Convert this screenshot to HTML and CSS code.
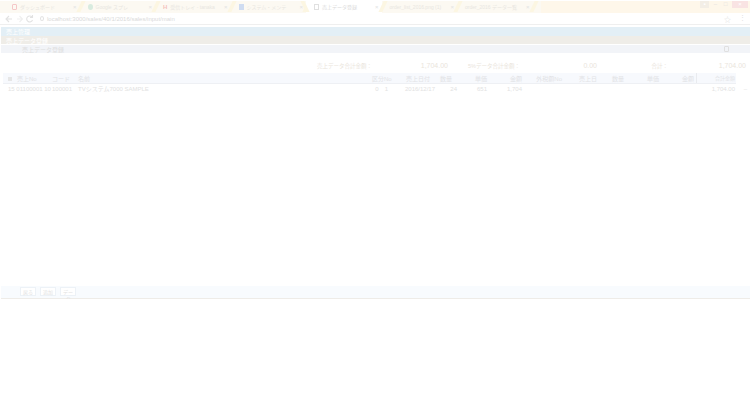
FILE: index.html
```html
<!DOCTYPE html>
<html lang="ja">
<head>
    <meta charset="UTF-8">
    <title>売上データ登録</title>
    <link rel="stylesheet" href="styles.css">
</head>
<body>
    <div class="tabs">
        <div class="tab"><span class="fav fav-red"></span><span class="tab-title">ダッシュボード</span><span class="tab-x">×</span></div>
        <div class="tab"><span class="fav fav-green"></span><span class="tab-title">Google スプレ</span><span class="tab-x">×</span></div>
        <div class="tab"><span class="fav-h">H</span><span class="tab-title">受信トレイ - tanaka</span><span class="tab-x">×</span></div>
        <div class="tab"><span class="fav fav-blue"></span><span class="tab-title">システム・メンテ</span><span class="tab-x">×</span></div>
        <div class="tab tab-active"><span class="fav fav-page"></span><span class="tab-title">売上データ登録</span><span class="tab-x">×</span></div>
        <div class="tab"><span class="tab-title">order_list_2016.png (1)</span><span class="tab-x">×</span></div>
        <div class="tab"><span class="tab-title">order_2016 データ一覧</span><span class="tab-x">×</span></div>
        <div class="win-btns">
            <span class="win-btn win-user">▪</span>
            <span class="win-btn">–</span>
            <span class="win-btn">□</span>
            <span class="win-btn win-close">×</span>
        </div>
    </div>

    <div class="addr">
        <svg class="nav" width="30" height="10" viewBox="0 0 30 10" fill="none" stroke="#e2e2e2" stroke-width="1.1">
            <path d="M7 5H1M4 2 1 5l3 3"/>
            <path d="M12 5h5.500M14.500 2l3 3-3 3" stroke="#efefef"/>
            <path d="M27 3a3 3 0 1 0 .5 3M27.500 1v2.500H25"/>
        </svg>
        <span class="addr-info"></span>
        <span class="addr-url">localhost:3000/sales/40/1/2016/sales/input/main</span>
        <span class="addr-icons"><span>☆</span><span>⋮</span></span>
    </div>

    <div class="bar bar-blue">売上管理</div>
    <div class="bar bar-beige">売上データ登録</div>
    <div class="bar bar-grey">
        <span>売上データ登録</span>
        <span class="bar-icon"></span>
    </div>

    <div class="totals">
        <span>売上データ合計金額：</span>
        <span class="t-num">1,704.00</span>
        <span>5%データ合計金額：</span>
        <span class="t-num">0.00</span>
        <span>合計：</span>
        <span class="t-num">1,704.00</span>
    </div>

    <div class="grid">
        <div class="row row-head">
            <span class="c-id"><i class="sort"></i>売上No</span>
            <span>コード</span>
            <span>名前</span>
            <span class="c-num">区分No</span>
            <span class="c-num c-pad5">売上日付</span>
            <span class="c-num c-pad5">数量</span>
            <span class="c-num">単価</span>
            <span class="c-num">金額</span>
            <span class="c-num">外税額No</span>
            <span class="c-num">売上日</span>
            <span class="c-num">数量</span>
            <span class="c-num">単価</span>
            <span class="c-num c-pad2">金額</span>
            <span class="c-num c-total">合計金額</span>
        </div>
        <div class="row row-body">
            <span class="c-id">15 01100001 10</span>
            <span>100001</span>
            <span>TVシステム7000 SAMPLE</span>
            <span class="c-num">0　1</span>
            <span class="c-num">2016/12/17</span>
            <span class="c-num">24</span>
            <span class="c-num">651</span>
            <span class="c-num">1,704</span>
            <span></span>
            <span></span>
            <span></span>
            <span></span>
            <span></span>
            <span class="c-num c-sum">1,704.00</span>
            <span class="c-more">–</span>
        </div>
    </div>

    <div class="foot">
        <button class="btn">戻る</button>
        <button class="btn">追加</button>
        <button class="btn">データ</button>
    </div>
</body>
</html>
```

FILE: styles.css
```css
* { box-sizing: border-box; }
body {
    margin: 0;
    background: #fff;
    font-family: "Liberation Sans", "Noto Sans CJK JP", sans-serif;
    font-size: 6px;
    color: #e2e2e2;
    overflow: hidden;
}

.tabs {
    display: flex;
    height: 12px;
    margin-top: 1px;
    padding-left: 4px;
    background: linear-gradient(to right, #fcf9f2 541px, #fef7ea 541px);
}
.tab {
    position: relative;
    display: flex;
    align-items: center;
    gap: 3px;
    flex: none;
    width: 75.500px;
    padding: 0 0 1px 8px;
    font-size: 5px;
    color: #e8e6e1;
}
.tab::after {
    content: "";
    position: absolute;
    top: 0;
    right: -3px;
    width: 4px;
    height: 11px;
    background: #fcf6e2;
    transform: skewX(-25deg);
}
.tab-active {
    background: #fff;
    color: #dadada;
}
.tab-active::before {
    content: "";
    position: absolute;
    top: 0;
    left: -3px;
    width: 4px;
    height: 11px;
    background: #fcf6e2;
    transform: skewX(25deg);
}
.tab-title {
    flex: 1;
    white-space: nowrap;
    min-width: 0;
}
.tab-x {
    flex: none;
    margin-right: 3px;
    font-size: 6px;
    color: #e2e2e2;
}
.fav {
    flex: none;
    width: 5px;
    height: 6px;
}
.fav-red { border: 1px solid #f5c8c8; border-radius: 1px; }
.fav-green { background: #d8ebdf; border-radius: 50%; }
.fav-h { flex: none; color: #f4c2bd; font-size: 6px; font-weight: bold; }
.fav-blue { background: #cfdcf1; }
.fav-page { border: 1px solid #e0e0e0; }

.win-btns {
    margin-left: auto;
    display: flex;
    gap: 1px;
    padding-right: 2px;
    color: #dedede;
}
.win-btn {
    width: 9px;
    height: 7px;
    line-height: 7px;
    text-align: center;
}
.win-user { background: #f3eee6; color: #fff; margin-right: 1px; }
.win-close { background: #f9e3e3; color: #fff; width: 16px; margin-left: 1px; }

.addr {
    display: flex;
    align-items: center;
    height: 12px;
    padding: 0 4px 0 5px;
    border-bottom: 1px solid #efefef;
}
.nav { flex: none; margin-right: 5px; }
.addr-info {
    flex: none;
    width: 4px;
    height: 5px;
    margin-right: 3px;
    border: 1px solid #e2e2e2;
    border-radius: 50%;
}
.addr-url { color: #dadada; white-space: nowrap; }
.addr-icons {
    display: flex;
    gap: 8px;
    margin-left: auto;
    color: #e0e0e0;
    font-size: 7px;
}

.bar {
    display: flex;
    align-items: center;
    justify-content: space-between;
    height: 8px;
    margin-left: 1px;
    padding: 0 5px;
    color: #fff;
}
.bar-blue { height: 9px; margin-top: 2px; background: #e3eff6; }
.bar-beige { background: #efede8; }
.bar-grey {
    margin-top: 1px;
    padding: 0 21px;
    background: #f2f4f8;
    color: #dfdfdf;
}
.bar-icon { width: 5px; height: 6px; border: 1px solid #e0e0e0; border-radius: 1px; }

.totals {
    display: grid;
    grid-template-columns: 372px 76px 72px 77px 71px 78px;
    align-items: baseline;
    height: 20px;
    padding-top: 9px;
    color: #eae5dc;
    font-size: 5.500px;
    text-align: right;
    white-space: nowrap;
}
.t-num { font-size: 7px; }

.grid { margin-left: 3px; }
.row {
    display: grid;
    grid-template-columns: 49px 26px 294px 16px 47px 22px 30px 35px 40px 35px 27px 35px 37px 40px;
    align-items: center;
    white-space: nowrap;
}
.row-head {
    width: 733px;
    height: 11px;
    background: #f7f9fd;
    border-bottom: 1px solid #eef0f4;
    color: #e2e3e6;
}
.row-body {
    grid-template-columns: 49px 26px 294px 16px 47px 22px 30px 35px 40px 35px 27px 35px 37px 40px 11px;
    height: 9px;
    color: #e2e2e2;
}
.c-id { padding-left: 5px; }
.c-num { text-align: right; }
.c-pad5 { padding-right: 5px; }
.c-pad2 { padding-right: 2px; }
.c-total {
    height: 10px;
    padding-right: 1px;
    font-size: 5px;
    line-height: 10px;
    border-left: 1px solid #e9ebef;
}
.c-sum { padding-right: 1px; }
.c-more { text-align: right; }
.sort {
    display: inline-block;
    width: 4px;
    height: 4px;
    margin-right: 5px;
    background: #e6e6e6;
}

.foot {
    display: flex;
    align-items: center;
    gap: 4px;
    height: 13px;
    margin: 193px 0 0 1px;
    padding: 0 0 1px 19px;
    background: #f8fbfe;
    border-bottom: 1px solid #eeece8;
}
.btn {
    width: 16px;
    height: 9px;
    padding: 0;
    font: inherit;
    font-size: 5px;
    color: #e2e2e2;
    background: #fff;
    border: 1px solid #edf2f7;
}
```
